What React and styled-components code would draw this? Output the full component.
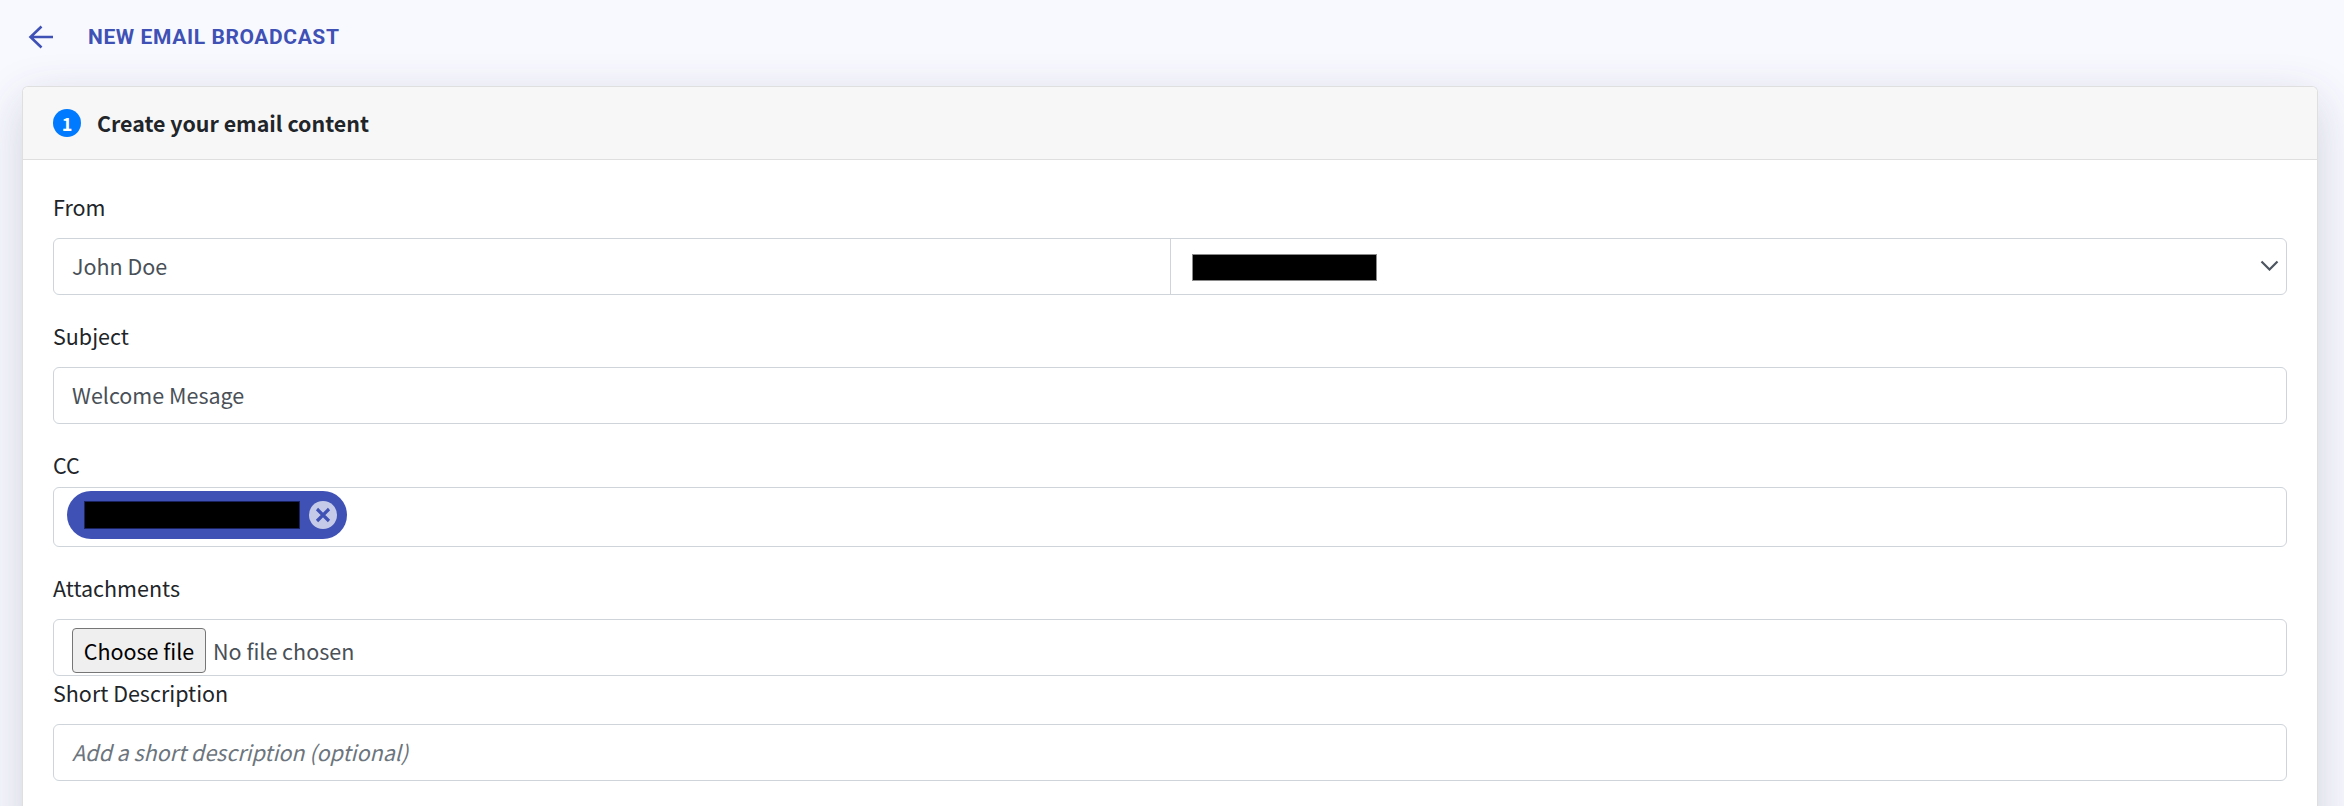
import React from 'react'
import styled, { createGlobalStyle } from 'styled-components'

const GlobalStyle = createGlobalStyle`
html, body {
    margin: 0;
    height: 100%;
    overflow: hidden;
    background-color: #f8f9ff;
}
* {
    box-sizing: border-box;
}
`
const Page = styled.div`
height: 100vh;
overflow: hidden;
padding: 0 26px 0 22px;
font-family: "Noto Sans CJK JP", "Noto Sans", sans-serif;
font-size: 21.5px;
line-height: 36px;
color: #212529;
`
const TopBar = styled.header`
display: flex;
align-items: center;
height: 86px;
padding: 0 0 12px 6px;
gap: 34px;
`
const BackLink = styled.a`
display: flex;
color: #3f51b5;
`
const PageTitle = styled.h1`
margin: 0;
font-family: Roboto, "Liberation Sans", sans-serif;
font-size: 21px;
font-weight: 700;
letter-spacing: 0.6px;
line-height: 30px;
color: #3f51b5;
text-transform: uppercase;
`
const Card = styled.section`
background: #fff;
border: 1.5px solid #dfdfdf;
border-bottom: 0;
border-radius: 6px 6px 0 0;
box-shadow: 0 14px 48px rgba(50, 55, 80, 0.2);
min-height: 900px;
`
const CardHeader = styled.div`
display: flex;
align-items: center;
gap: 16px;
height: 73px;
padding: 0 30px;
background: #f7f7f7;
border-bottom: 1.5px solid #dfdfdf;
border-radius: 5px 5px 0 0;
`
const StepBadge = styled.span`
display: flex;
align-items: center;
justify-content: center;
width: 28px;
height: 28px;
border-radius: 50%;
background: #007bff;
color: #fff;
font-size: 18px;
font-weight: 700;
line-height: 28px;
`
const CardTitle = styled.h2`
margin: 0;
font-size: 21.4px;
font-weight: 700;
line-height: 36px;
color: #212529;
`
const CardBody = styled.div`
padding: 30px 30px 0;
`
const Group = styled.div`
margin-bottom: ${(p) => p.$gap ?? 24}px;
`
const Label = styled.label`
display: block;
margin-top: -1px;
margin-bottom: ${(p) => (p.$gap ?? 12) + 1}px;
color: #212529;
`
const Field = styled.div`
display: flex;
align-items: center;
height: ${(p) => p.$height ?? 57}px;
padding: 0 18px 2px;
border: 1.5px solid #ced4da;
border-radius: 6px;
background: #fff;
color: #495057;
`
const PlaceholderText = styled.span`
font-style: italic;
color: #6c757d;
`
const SplitField = styled.div`
display: grid;
grid-template-columns: 1fr 1fr;
height: 57px;
border: 1.5px solid #ced4da;
border-radius: 6px;
background: #fff;
color: #495057;
`
const SplitCell = styled.div`
display: flex;
align-items: center;
justify-content: space-between;
padding: 0 7px 2px ${(p) => p.$pad}px;
border-left: ${(p) => (p.$divided ? '1.5px solid #ced4da' : '0')};
`
const Redacted = styled.div`
width: ${(p) => p.$width}px;
height: ${(p) => p.$height}px;
margin-top: ${(p) => p.$shift ?? 0}px;
background: #000;
border: 1px solid ${(p) => p.$edge};
`
const TagField = styled(Field)`
padding: 0 12.5px;
`
const Tag = styled.div`
display: flex;
align-items: center;
height: 48px;
margin-top: -4px;
padding: 0 10px 0 17px;
border-radius: 24px;
background: #3f51b5;
gap: 9px;
`
const TagClose = styled.span`
display: flex;
align-items: center;
justify-content: center;
width: 28px;
height: 28px;
border-radius: 50%;
background: #c5cae9;
color: #3f51b5;
`
const FileField = styled(Field)`
align-items: flex-start;
padding: 8px 18px 0;
`
const FileButton = styled.button`
height: 45px;
width: 134px;
margin: 0 7px 0 0;
padding: 0;
border: 1.5px solid #767676;
border-radius: 4px;
background: #efefef;
font-family: inherit;
font-size: 21.5px;
line-height: 36px;
color: #000;
`
const FileStatus = styled.span`
line-height: 46px;
color: #495057;
`

const BackArrow = () => (
    <svg width="26" height="24" viewBox="0 0 26 24" fill="none" stroke="currentColor" strokeWidth="2.6">
        <path d="M25 12H2.5M13.5 1.5 2.5 12l11 10.5" />
    </svg>
)

const Chevron = () => (
    <svg width="19" height="11" viewBox="0 0 19 11" fill="none" stroke="#4d5560" strokeWidth="2.2">
        <path d="M1.5 1.5l8 8 8-8" />
    </svg>
)

const CloseIcon = () => (
    <svg width="16" height="16" viewBox="0 0 16 16" fill="none" stroke="currentColor" strokeWidth="3.2">
        <path d="M2 2l12 12M14 2L2 14" />
    </svg>
)

export default function App() {
    return (
        <Page>
            <GlobalStyle />
            <TopBar>
                <BackLink><BackArrow /></BackLink>
                <PageTitle>New Email Broadcast</PageTitle>
            </TopBar>
            <Card>
                <CardHeader>
                    <StepBadge>1</StepBadge>
                    <CardTitle>Create your email content</CardTitle>
                </CardHeader>
                <CardBody>
                    <Group>
                        <Label>From</Label>
                        <SplitField>
                            <SplitCell $pad={18}>John Doe</SplitCell>
                            <SplitCell $pad={21} $divided>
                                <Redacted $width={185} $height={27} $edge="#8a8a8a" $shift={3} />
                                <Chevron />
                            </SplitCell>
                        </SplitField>
                    </Group>
                    <Group>
                        <Label>Subject</Label>
                        <Field>Welcome Mesage</Field>
                    </Group>
                    <Group>
                        <Label $gap={3}>CC</Label>
                        <TagField $height={60}>
                            <Tag>
                                <Redacted $width={216} $height={28} $edge="#1a2260" />
                                <TagClose><CloseIcon /></TagClose>
                            </Tag>
                        </TagField>
                    </Group>
                    <Group $gap={0}>
                        <Label>Attachments</Label>
                        <FileField>
                            <FileButton type="button">Choose file</FileButton>
                            <FileStatus>No file chosen</FileStatus>
                        </FileField>
                    </Group>
                    <Group>
                        <Label>Short Description</Label>
                        <Field><PlaceholderText>Add a short description (optional)</PlaceholderText></Field>
                    </Group>
                </CardBody>
            </Card>
        </Page>
    )
}
